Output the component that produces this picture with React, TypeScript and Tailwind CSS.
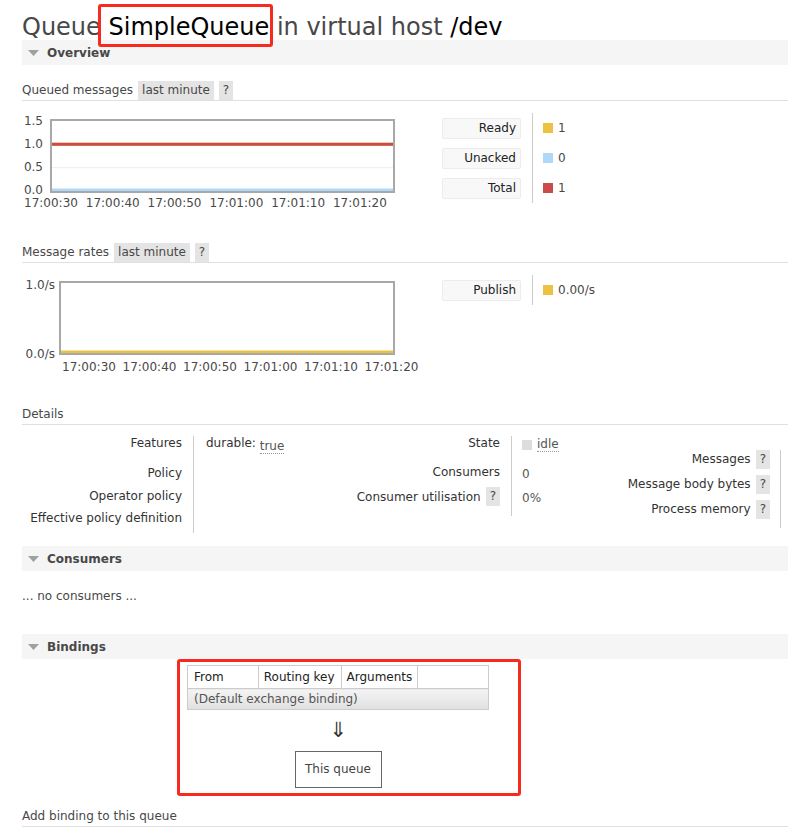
import React from "react";

const Tri = () => (
  <svg width="11" height="6" viewBox="0 0 11 6" className="block shrink-0">
    <polygon points="0,0 11,0 5.5,6" fill="#a0a0a0" />
  </svg>
);

function SectionHeader({ title }: { title: string }) {
  return (
    <div className="flex h-[25px] items-center bg-[#f5f5f5] pl-[6px] font-bold text-[#484848]">
      <Tri />
      <span className="ml-[8px]">{title}</span>
    </div>
  );
}

function SubHeader({ label, range }: { label: string; range?: boolean }) {
  return (
    <div className="flex h-[20px] items-start border-b border-[#e0e0e0]">
      <span className="leading-[19px]">{label}</span>
      {range && (
        <>
          <span className="ml-[5px] bg-[#e4e4e4] px-[4px] leading-[19px]">last minute</span>
          <span className="ml-[5px] bg-[#e4e4e4] px-[4px] leading-[19px]">?</span>
        </>
      )}
    </div>
  );
}

type LegendItem = { label: string; value: string; color: string };

function Legend({ items }: { items: LegendItem[] }) {
  return (
    <div className="flex items-start">
      <div className="flex w-[90px] flex-col">
        {items.map((i) => (
          <div key={i.label} className="flex h-[30px] items-center">
            <div className="h-[21px] w-[79px] rounded-[2px] border border-[#ececec] bg-[#f8f8f8] pr-[4px] text-right leading-[19px] text-[#222]">
              {i.label}
            </div>
          </div>
        ))}
      </div>
      <div className="flex flex-col border-l border-[#ccc] pl-[10px]">
        {items.map((i) => (
          <div key={i.label} className="flex h-[30px] items-center">
            <span className={"h-[10px] w-[10px] " + i.color} />
            <span className="ml-[5px]">{i.value}</span>
          </div>
        ))}
      </div>
    </div>
  );
}

function QBox() {
  return <span className="ml-[5px] h-[19px] shrink-0 bg-[#e4e4e4] px-[4px] leading-[19px] text-[#484848]">?</span>;
}

const xLabels = ["17:00:30", "17:00:40", "17:00:50", "17:01:00", "17:01:10", "17:01:20"];

export default function App() {
  return (
    <div className="w-[788px] bg-white pl-[22px] font-['DejaVu_Sans',sans-serif] text-[12px] leading-[14px] text-[#484848]">
      {/* Title */}
      <h1 className="relative h-[40px] pt-[13px] text-[24px] font-normal leading-[28px] text-[#484848] whitespace-nowrap">
        Queue <span className="text-black">SimpleQueue</span> in virtual host <span className="text-black">/dev</span>
        <div className="pointer-events-none absolute left-[76px] top-[4px] z-10 h-[43px] w-[175px] rounded-[3px] border-[3px] border-[#f72a1f]" />
      </h1>

      <SectionHeader title="Overview" />

      <div className="mt-[16px]">
        <SubHeader label="Queued messages" range />
      </div>

      {/* Queued messages chart */}
      <div className="mt-[12px] flex items-start">
        <div className="w-[420px]">
          <div className="flex items-start">
            <div className="mt-[1px] flex h-[83px] w-[28px] flex-col justify-between pr-[7px] text-right">
              <span>1.5</span>
              <span>1.0</span>
              <span>0.5</span>
              <span>0.0</span>
            </div>
            <div className="mt-[6px] h-[74px] w-[345px] border-2 border-[#a8a8a8]">
              <svg width="341" height="70" viewBox="0 0 341 70" className="block">
                <line x1="0" y1="46.7" x2="341" y2="46.7" stroke="#ececec" strokeWidth="1" />
                <line x1="0" y1="23.3" x2="341" y2="23.3" stroke="#edc240" strokeWidth="3" />
                <line x1="0" y1="23.3" x2="341" y2="23.3" stroke="#cb4b4b" strokeWidth="3" />
                <line x1="0" y1="69" x2="341" y2="69" stroke="#afd8f8" strokeWidth="3" />
              </svg>
            </div>
          </div>
          <div className="ml-[2px] flex leading-[13px]">
            {xLabels.map((l) => (
              <span key={l} className="w-[61.8px] shrink-0">{l}</span>
            ))}
          </div>
        </div>
        <Legend
          items={[
            { label: "Ready", value: "1", color: "bg-[#edc240]" },
            { label: "Unacked", value: "0", color: "bg-[#afd8f8]" },
            { label: "Total", value: "1", color: "bg-[#cb4b4b]" },
          ]}
        />
      </div>

      <div className="mt-[33px]">
        <SubHeader label="Message rates" range />
      </div>

      {/* Message rates chart */}
      <div className="mt-[12px] flex items-start">
        <div className="w-[420px]">
          <div className="flex items-start">
            <div className="mt-[3px] flex h-[83px] w-[37px] flex-col justify-between pr-[4px] text-right">
              <span>1.0/s</span>
              <span>0.0/s</span>
            </div>
            <div className="mt-[6px] h-[74px] w-[336px] border-2 border-[#a8a8a8]">
              <svg width="332" height="70" viewBox="0 0 332 70" className="block">
                <line x1="0" y1="69" x2="332" y2="69" stroke="#edc240" strokeWidth="3" />
              </svg>
            </div>
          </div>
          <div className="ml-[40px] flex leading-[13px]">
            {xLabels.map((l) => (
              <span key={l} className="w-[60.5px] shrink-0">{l}</span>
            ))}
          </div>
        </div>
        <Legend items={[{ label: "Publish", value: "0.00/s", color: "bg-[#edc240]" }]} />
      </div>

      <div className="mt-[31px]">
        <SubHeader label="Details" />
      </div>

      {/* Details */}
      <div className="mt-[11px] flex items-start">
        <div className="flex">
          <div className="w-[172px] border-r border-[#ccc] pr-[11px] text-right text-[#333]">
            <div className="h-[30px]">Features</div>
            <div className="h-[23px]">Policy</div>
            <div className="h-[22px]">Operator policy</div>
            <div className="h-[22px]">Effective policy definition</div>
          </div>
          <div className="w-[151px] pl-[12px]">
            <div className="h-[30px] text-[#333]">
              durable:{" "}
              <span className="inline-block border-b border-dotted border-[#999] align-[-3px] leading-[13px] text-[#555]">true</span>
            </div>
          </div>
        </div>

        <div className="flex">
          <div className="w-[167px] border-r border-[#ccc] pr-[11px] text-right text-[#333]">
            <div className="h-[29px]">State</div>
            <div className="h-[22px]">Consumers</div>
            <div className="flex h-[29px] items-start justify-end">
              <span className="pt-[3px] whitespace-nowrap">Consumer utilisation</span>
              <QBox />
            </div>
          </div>
          <div className="w-[90px] pl-[10px] text-[#555]">
            <div className="flex h-[29px] items-start">
              <span className="mt-[4px] h-[10px] w-[10px] bg-[#ddd]" />
              <span className="ml-[5px] mt-[2px] border-b border-dotted border-[#999] leading-[13px]">idle</span>
            </div>
            <div className="h-[22px] pt-[2px]">0</div>
            <div className="h-[29px] pt-[4px]">0%</div>
          </div>
        </div>

        <div className="ml-auto mr-[7px] mt-[14px] border-r border-[#ccc] pb-[3px] pr-[10px] text-[#333]">
          <div className="flex h-[25px] items-start justify-end">
            <span className="pt-[2px]">Messages</span>
            <QBox />
          </div>
          <div className="flex h-[25px] items-start justify-end">
            <span className="pt-[2px] whitespace-nowrap">Message body bytes</span>
            <QBox />
          </div>
          <div className="flex h-[25px] items-start justify-end">
            <span className="pt-[2px] whitespace-nowrap">Process memory</span>
            <QBox />
          </div>
        </div>
      </div>

      <div className="mt-[13px]">
        <SectionHeader title="Consumers" />
      </div>
      <div className="mt-[18px]">... no consumers ...</div>

      <div className="mt-[31px]">
        <SectionHeader title="Bindings" />
      </div>

      {/* Bindings */}
      <div className="ml-[155px] w-[344px] rounded-[3px] border-[3px] border-[#f72a1f] pb-[5px] pl-[7px] pt-[3px]">
        <table className="w-[302px] border-collapse border border-[#ccc]">
          <thead>
            <tr className="h-[23px] text-left text-[#222]">
              <th className="w-[71px] border border-[#ccc] pl-[6px] font-normal">From</th>
              <th className="w-[83px] border border-[#ccc] pl-[5px] font-normal">Routing key</th>
              <th className="w-[77px] border border-[#ccc] pl-[5px] font-normal">Arguments</th>
              <th className="w-[71px] border border-[#ccc] font-normal"></th>
            </tr>
          </thead>
          <tbody>
            <tr className="h-[21px]">
              <td colSpan={4} className="border border-[#ccc] bg-linear-to-b from-[#f4f4f4] to-[#e0e0e0] pl-[6px] text-[#555]">
                (Default exchange binding)
              </td>
            </tr>
          </tbody>
        </table>
        <div className="w-[302px] h-[41px] text-center text-[21px] leading-[41px] text-[#333]">⇓</div>
        <div className="w-[302px] flex justify-center">
          <div className="h-[37px] w-[87px] border border-[#666] text-center leading-[35px] text-[#444]">This queue</div>
        </div>
      </div>

      <div className="mt-[11px]">
        <SubHeader label="Add binding to this queue" />
      </div>
    </div>
  );
}
